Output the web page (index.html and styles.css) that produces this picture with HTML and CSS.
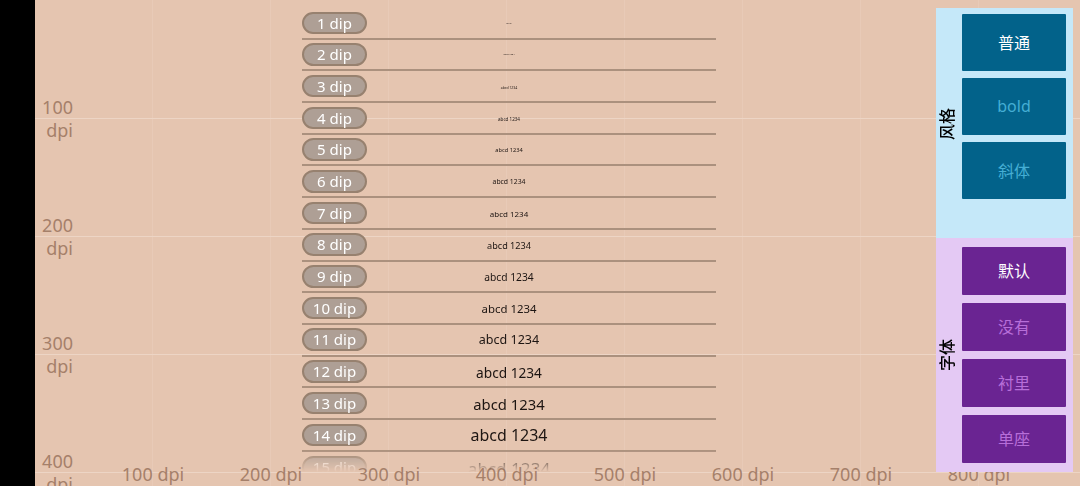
FILE: index.html
```html
<!DOCTYPE html>
<html lang="zh">
<head>
<meta charset="utf-8">
<title>Text sizes</title>
<link rel="stylesheet" href="styles.css">
</head>
<body>
<div class="edge"></div>
<main class="canvas">
  <div class="ruler-y">
    <div class="tick-y">100<br>dpi</div>
    <div class="tick-y">200<br>dpi</div>
    <div class="tick-y">300<br>dpi</div>
    <div class="tick-y">400<br>dpi</div>
  </div>
  <div class="ruler-x">
    <span class="tick-x">100 dpi</span>
    <span class="tick-x">200 dpi</span>
    <span class="tick-x">300 dpi</span>
    <span class="tick-x">400 dpi</span>
    <span class="tick-x">500 dpi</span>
    <span class="tick-x">600 dpi</span>
    <span class="tick-x">700 dpi</span>
    <span class="tick-x">800 dpi</span>
  </div>
  <div class="content">
    <section class="list">
      <div class="row"><span class="pill">1 dip</span><span class="sample" style="font-size:1.14px">abcd 1234</span></div>
      <div class="row"><span class="pill">2 dip</span><span class="sample" style="font-size:2.28px">abcd 1234</span></div>
      <div class="row"><span class="pill">3 dip</span><span class="sample" style="font-size:3.42px">abcd 1234</span></div>
      <div class="row"><span class="pill">4 dip</span><span class="sample" style="font-size:4.56px">abcd 1234</span></div>
      <div class="row"><span class="pill">5 dip</span><span class="sample" style="font-size:5.7px">abcd 1234</span></div>
      <div class="row"><span class="pill">6 dip</span><span class="sample" style="font-size:6.84px">abcd 1234</span></div>
      <div class="row"><span class="pill">7 dip</span><span class="sample" style="font-size:7.98px">abcd 1234</span></div>
      <div class="row"><span class="pill">8 dip</span><span class="sample" style="font-size:9.12px">abcd 1234</span></div>
      <div class="row"><span class="pill">9 dip</span><span class="sample" style="font-size:10.26px">abcd 1234</span></div>
      <div class="row"><span class="pill">10 dip</span><span class="sample" style="font-size:11.4px">abcd 1234</span></div>
      <div class="row"><span class="pill">11 dip</span><span class="sample" style="font-size:12.54px">abcd 1234</span></div>
      <div class="row"><span class="pill">12 dip</span><span class="sample" style="font-size:13.68px">abcd 1234</span></div>
      <div class="row"><span class="pill">13 dip</span><span class="sample" style="font-size:14.82px">abcd 1234</span></div>
      <div class="row"><span class="pill">14 dip</span><span class="sample" style="font-size:15.96px">abcd 1234</span></div>
      <div class="row"><span class="pill">15 dip</span><span class="sample" style="font-size:17.1px">abcd 1234</span></div>
    </section>
    <aside class="panel">
      <section class="group group-style">
        <h2 class="side-label">风格</h2>
        <div class="buttons">
          <button class="btn btn-on">普通</button>
          <button class="btn">bold</button>
          <button class="btn">斜体</button>
        </div>
      </section>
      <section class="group group-font">
        <h2 class="side-label">字体</h2>
        <div class="buttons">
          <button class="btn btn-on">默认</button>
          <button class="btn">没有</button>
          <button class="btn">衬里</button>
          <button class="btn">单座</button>
        </div>
      </section>
    </aside>
  </div>
</main>
</body>
</html>
```
FILE: styles.css
```css
* { box-sizing: border-box; }
html, body { height: 100%; }
body {
  margin: 0;
  display: flex;
  height: 486px;
  overflow: hidden;
  background: #000;
  font-family: "Noto Sans", "Noto Sans CJK SC", sans-serif;
}
.edge { width: 35px; flex: none; background: #000; }
.canvas {
  position: relative;
  flex: 1;
  height: 486px;
  overflow: hidden;
  background-color: #e5c5b0;
  background-image:
    linear-gradient(#edd5c5, #edd5c5),
    linear-gradient(#edd5c5, #edd5c5),
    linear-gradient(#edd5c5, #edd5c5),
    linear-gradient(#edd5c5, #edd5c5),
    linear-gradient(to right, #e8cab7 1px, transparent 1px);
  background-size: 100% 1px, 100% 1px, 100% 1px, 100% 1px, 118px 100%;
  background-position: 0 118px, 0 236px, 0 354px, 0 472px, 117px 0;
  background-repeat: no-repeat, no-repeat, no-repeat, no-repeat, repeat-x;
}
.ruler-y {
  position: absolute;
  left: 0;
  top: 0;
  display: flex;
  flex-direction: column;
  padding-top: 95.5px;
}
.tick-y {
  height: 118px;
  width: 38px;
  text-align: right;
  font-size: 18px;
  line-height: 23px;
  color: #a5806a;
}
.ruler-x {
  position: absolute;
  left: 59px;
  top: 462px;
  display: flex;
}
.tick-x {
  width: 118px;
  text-align: center;
  font-size: 18px;
  line-height: 24px;
  color: #a5806a;
}
.content {
  position: relative;
  display: flex;
  padding: 8px 0 0 267px;
  align-items: flex-start;
}
.list {
  width: 414px;
  flex: none;
  -webkit-mask-image: linear-gradient(to bottom, #000 442px, transparent 464px);
  mask-image: linear-gradient(to bottom, #000 442px, transparent 464px);
}
.row {
  display: grid;
  grid-template-columns: 1fr auto 1fr;
  align-items: center;
  height: 31.7px;
  border-bottom: 2px solid #ab917e;
}
.row:last-child { border-bottom: 0; }
.pill {
  justify-self: start;
  width: 65px;
  height: 22.5px;
  border: 2px solid #97816f;
  border-radius: 12px;
  background: #ae9f95;
  color: #fff;
  font-size: 15px;
  line-height: 18px;
  text-align: center;
}
.sample {
  padding-top: 2px;
  color: #1d1512;
  white-space: nowrap;
  line-height: 1;
}
.panel {
  width: 137px;
  height: 464px;
  margin-left: 220px;
  flex: none;
  display: flex;
  flex-direction: column;
}
.group { display: flex; }
.group-style { height: 230px; background: #c5e8f9; padding-top: 6px; }
.group-font { height: 234px; background: #e4c9f4; padding-top: 9px; }
.side-label {
  width: 26px;
  margin: 0;
  padding-left: 4px;
  align-self: center;
  display: flex;
  justify-content: center;
  writing-mode: vertical-rl;
  text-orientation: sideways;
  transform: rotate(180deg);
  font-size: 16px;
  line-height: 22px;
  font-weight: 500;
  color: #000;
}
.group-style .side-label { margin-top: -4px; }
.group-font .side-label { margin-top: -8px; }
.buttons { display: flex; flex-direction: column; width: 104px; }
.group-style .buttons { gap: 7px; }
.group-font .buttons { gap: 8px; }
.btn {
  display: block;
  width: 104px;
  border: 0;
  border-radius: 1px;
  padding: 0 0 2px;
  font-family: inherit;
  font-size: 16px;
}
.group-style .btn { height: 57px; background: #02628a; color: #45aed4; }
.group-font .btn { height: 48px; background: #6a2492; color: #b76ed9; }
.group .btn-on { color: #fff; }
```
